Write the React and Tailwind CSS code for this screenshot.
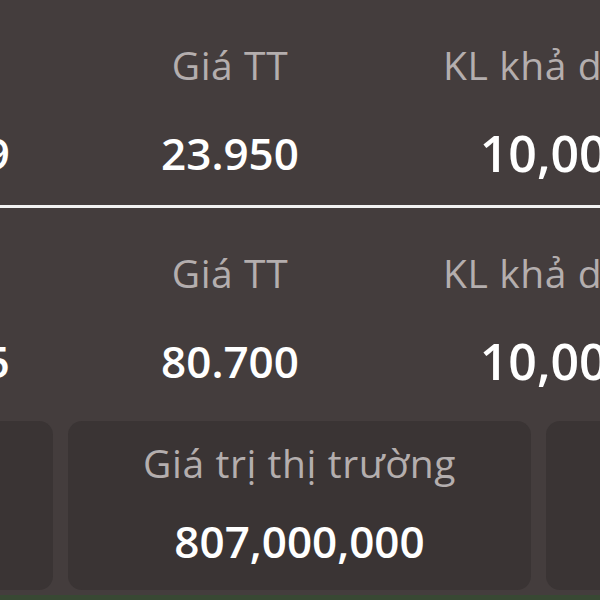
import React from "react";

const font = { fontFamily: "'Open Sans', 'Noto Sans', sans-serif" };

function Block({ v1, v2, v3 }) {
  return (
    <div className="h-[205px] flex flex-col shrink-0">
      <div className="flex pt-[45px] h-[84px] text-[39px] leading-[39px] tracking-[0.6px] text-[#b4aeae] whitespace-nowrap">
        <div className="w-[322px] -ml-[256px] pr-[56px] shrink-0 text-right">&nbsp;</div>
        <div className="w-[328px] shrink-0 text-center">Giá TT</div>
        <div className="w-[328px] shrink-0 text-center">KL khả dụng</div>
      </div>
      <div className="flex mt-[41px] h-[56px] items-center text-white font-semibold whitespace-nowrap">
        <div className="w-[322px] -ml-[256px] pr-[56px] shrink-0 text-right text-[44px] leading-[44px]">{v1}</div>
        <div className="w-[328px] shrink-0 text-center text-[44px] leading-[44px]">{v2}</div>
        <div className="w-[328px] shrink-0 text-center text-[50px] leading-[50px]">{v3}</div>
      </div>
    </div>
  );
}

export default function App() {
  return (
    <div className="w-[600px] h-[600px] overflow-hidden bg-[#443d3d] flex flex-col" style={font}>
      <Block v1="24.009" v2="23.950" v3="10,000" />
      <div className="h-[3px] bg-[#f2f2f2] shrink-0" />
      <Block v1="80.465" v2="80.700" v3="10,000" />
      <div className="flex gap-[15px] pt-[8px] h-[177px] shrink-0">
        <div className="w-[463px] -ml-[410px] shrink-0 rounded-[14px] bg-[#3a3434]" />
        <div className="w-[463px] shrink-0 rounded-[14px] bg-[#3a3434] flex flex-col items-center pt-[22px]">
          <div className="text-[39px] leading-[39px] tracking-[0.6px] text-[#b4aeae] whitespace-nowrap">Giá trị thị trường</div>
          <div className="mt-[37px] text-[44px] leading-[44px] text-white font-semibold whitespace-nowrap">807,000,000</div>
        </div>
        <div className="w-[463px] shrink-0 rounded-[14px] bg-[#3a3434]" />
      </div>
      <div className="h-[5px] mt-[5px] bg-[#384833] shrink-0" />
    </div>
  );
}
